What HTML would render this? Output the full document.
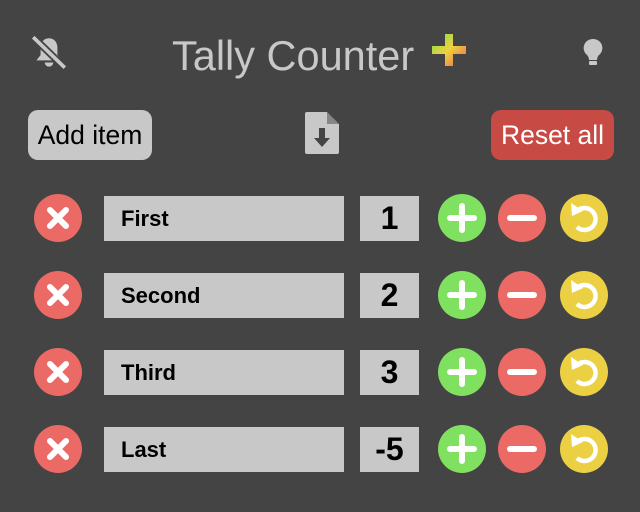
<!DOCTYPE html>
<html><head><style>
body{margin:0;width:640px;height:512px;background:#444;font-family:"Liberation Sans",sans-serif;position:relative;overflow:hidden}
.a{position:absolute}
.btn{position:absolute;border-radius:10px;font-size:26.5px;display:flex;align-items:center;justify-content:center}
.c{position:absolute;width:48px;height:48px;border-radius:50%}
.name{position:absolute;left:104px;width:240px;height:45px;background:#c8c8c8;font-weight:bold;font-size:22px;line-height:45px;padding-left:17px;box-sizing:border-box}
.num{position:absolute;left:360px;width:59px;height:45px;background:#c8c8c8;font-weight:bold;font-size:32px;line-height:45px;text-align:center}
</style></head><body>
<svg class="a" style="left:29px;top:35px" width="40" height="36" viewBox="0 0 38 34">
<path d="M19 3c-5 0-8 4-8 9v7l-4 5h24l-4-5v-7c0-5-3-9-8-9z" fill="#c8c8c8"/>
<path d="M15 26a4 4 0 0 0 8 0z" fill="#c8c8c8"/>
<line x1="4" y1="2" x2="34" y2="31" stroke="#444" stroke-width="7"/>
<line x1="4" y1="2" x2="34" y2="31" stroke="#c8c8c8" stroke-width="3.5"/>
</svg>
<div class="a" style="left:172px;top:32px;font-size:41.5px;color:#c8c8c8">Tally Counter</div>
<svg class="a" style="left:432px;top:34px" width="34" height="32" viewBox="0 0 34 32">
<defs><linearGradient id="g" x1="0" y1="0" x2="1" y2="1"><stop offset="0" stop-color="#7ee04a"/><stop offset=".5" stop-color="#f0d040"/><stop offset="1" stop-color="#e86050"/></linearGradient></defs>
<path d="M13 0h8v12h13v8H21v12h-8V20H0v-8h13z" fill="url(#g)"/>
</svg>
<svg class="a" style="left:582px;top:38px" width="22" height="30" viewBox="0 0 22 30">
<path d="M11 1a9 9 0 0 0-6 16c1 1 2 3 2 5h8c0-2 1-4 2-5a9 9 0 0 0-6-16z" fill="#c8c8c8"/>
<rect x="7" y="23" width="8" height="4" rx="1" fill="#c8c8c8"/>
</svg>
<div class="btn" style="left:28px;top:110px;width:124px;height:50px;background:#c8c8c8;color:#000">Add item</div>
<svg class="a" style="left:305px;top:112px" width="34" height="42" viewBox="0 0 34 42">
<path d="M0 2a2 2 0 0 1 2-2h20l12 12v28a2 2 0 0 1-2 2H2a2 2 0 0 1-2-2z" fill="#c8c8c8"/>
<path d="M22 0v12h12z" fill="#444" opacity=".5"/>
<path d="M14 16h6v10h5l-8 9-8-9h5z" fill="#444"/>
</svg>
<div class="btn" style="left:491px;top:110px;width:123px;height:50px;background:#c84a44;color:#fff">Reset all</div>

<div style="position:absolute;left:0;top:194px">
<div class="c" style="left:34px;top:0;background:#ec6a66"></div>
<svg class="a" style="left:34px;top:0" width="48" height="48"><path d="M16 16l16 16M32 16L16 32" stroke="#fff" stroke-width="6" stroke-linecap="round"/></svg>
<div class="name" style="top:2px">First</div><div class="num" style="top:2px">1</div>
<div class="c" style="left:438px;background:#80e060"></div><svg class="a" style="left:438px" width="48" height="48"><path d="M24 12v24M12 24h24" stroke="#fff" stroke-width="6" stroke-linecap="round"/></svg>
<div class="c" style="left:498px;background:#ec6a66"></div><svg class="a" style="left:498px" width="48" height="48"><path d="M12 24h24" stroke="#fff" stroke-width="6" stroke-linecap="round"/></svg>
<div class="c" style="left:560px;background:#ecd044"></div><svg class="a" style="left:560px" width="48" height="48"><path d="M17 17A11 11 0 1 1 17 33" fill="none" stroke="#fff" stroke-width="4.5"/><path d="M11 9l1 13 11-5z" fill="#fff"/></svg>
</div>
<div style="position:absolute;left:0;top:271px">
<div class="c" style="left:34px;top:0;background:#ec6a66"></div>
<svg class="a" style="left:34px;top:0" width="48" height="48"><path d="M16 16l16 16M32 16L16 32" stroke="#fff" stroke-width="6" stroke-linecap="round"/></svg>
<div class="name" style="top:2px">Second</div><div class="num" style="top:2px">2</div>
<div class="c" style="left:438px;background:#80e060"></div><svg class="a" style="left:438px" width="48" height="48"><path d="M24 12v24M12 24h24" stroke="#fff" stroke-width="6" stroke-linecap="round"/></svg>
<div class="c" style="left:498px;background:#ec6a66"></div><svg class="a" style="left:498px" width="48" height="48"><path d="M12 24h24" stroke="#fff" stroke-width="6" stroke-linecap="round"/></svg>
<div class="c" style="left:560px;background:#ecd044"></div><svg class="a" style="left:560px" width="48" height="48"><path d="M17 17A11 11 0 1 1 17 33" fill="none" stroke="#fff" stroke-width="4.5"/><path d="M11 9l1 13 11-5z" fill="#fff"/></svg>
</div>
<div style="position:absolute;left:0;top:348px">
<div class="c" style="left:34px;top:0;background:#ec6a66"></div>
<svg class="a" style="left:34px;top:0" width="48" height="48"><path d="M16 16l16 16M32 16L16 32" stroke="#fff" stroke-width="6" stroke-linecap="round"/></svg>
<div class="name" style="top:2px">Third</div><div class="num" style="top:2px">3</div>
<div class="c" style="left:438px;background:#80e060"></div><svg class="a" style="left:438px" width="48" height="48"><path d="M24 12v24M12 24h24" stroke="#fff" stroke-width="6" stroke-linecap="round"/></svg>
<div class="c" style="left:498px;background:#ec6a66"></div><svg class="a" style="left:498px" width="48" height="48"><path d="M12 24h24" stroke="#fff" stroke-width="6" stroke-linecap="round"/></svg>
<div class="c" style="left:560px;background:#ecd044"></div><svg class="a" style="left:560px" width="48" height="48"><path d="M17 17A11 11 0 1 1 17 33" fill="none" stroke="#fff" stroke-width="4.5"/><path d="M11 9l1 13 11-5z" fill="#fff"/></svg>
</div>
<div style="position:absolute;left:0;top:425px">
<div class="c" style="left:34px;top:0;background:#ec6a66"></div>
<svg class="a" style="left:34px;top:0" width="48" height="48"><path d="M16 16l16 16M32 16L16 32" stroke="#fff" stroke-width="6" stroke-linecap="round"/></svg>
<div class="name" style="top:2px">Last</div><div class="num" style="top:2px">-5</div>
<div class="c" style="left:438px;background:#80e060"></div><svg class="a" style="left:438px" width="48" height="48"><path d="M24 12v24M12 24h24" stroke="#fff" stroke-width="6" stroke-linecap="round"/></svg>
<div class="c" style="left:498px;background:#ec6a66"></div><svg class="a" style="left:498px" width="48" height="48"><path d="M12 24h24" stroke="#fff" stroke-width="6" stroke-linecap="round"/></svg>
<div class="c" style="left:560px;background:#ecd044"></div><svg class="a" style="left:560px" width="48" height="48"><path d="M17 17A11 11 0 1 1 17 33" fill="none" stroke="#fff" stroke-width="4.5"/><path d="M11 9l1 13 11-5z" fill="#fff"/></svg>
</div>
</body></html>
